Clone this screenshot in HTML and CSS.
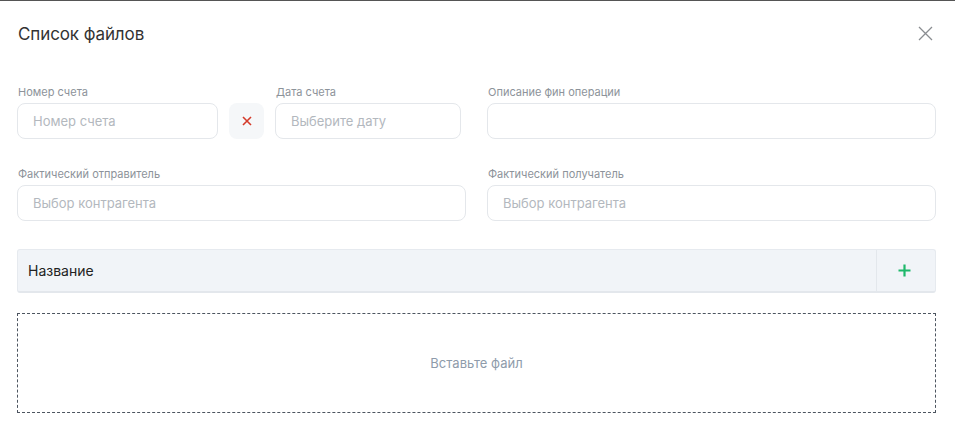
FILE: index.html
```html
<!DOCTYPE html>
<html lang="ru">
<head>
<meta charset="utf-8">
<title>Список файлов</title>
<link rel="stylesheet" href="styles.css">
</head>
<body>
<div class="modal">
  <div class="modal-head">
    <h1 class="title">Список файлов</h1>
    <button class="close" aria-label="Закрыть">
      <svg width="15" height="15" viewBox="0 0 15 15"><path d="M1 1L14 14M14 1L1 14" stroke="#8a8d91" stroke-width="1.3" fill="none"/></svg>
    </button>
  </div>

  <div class="form">
    <div class="row">
      <div class="group-left">
        <div class="field f-num">
          <label class="label">Номер счета</label>
          <input class="input" placeholder="Номер счета">
        </div>
        <button class="clear" aria-label="Очистить">
          <svg width="10" height="10" viewBox="0 0 10 10"><path d="M1 1L9 9M9 1L1 9" stroke="#d43a2a" stroke-width="1.6" fill="none"/></svg>
        </button>
        <div class="field f-date">
          <label class="label">Дата счета</label>
          <input class="input" placeholder="Выберите дату">
        </div>
      </div>
      <div class="field">
        <label class="label">Описание фин операции</label>
        <input class="input">
      </div>
    </div>

    <div class="row">
      <div class="field">
        <label class="label">Фактический отправитель</label>
        <input class="input" placeholder="Выбор контрагента">
      </div>
      <div class="field">
        <label class="label">Фактический получатель</label>
        <input class="input" placeholder="Выбор контрагента">
      </div>
    </div>
  </div>

  <div class="table-head">
    <div class="th-name">Название</div>
    <div class="th-add">
      <svg width="13" height="13" viewBox="0 0 13 13"><path d="M6.5 0.5V12.5M0.5 6.5H12.5" stroke="#1fb86b" stroke-width="2.2" fill="none"/></svg>
    </div>
  </div>

  <div class="dropzone">Вставьте файл</div>
</div>
</body>
</html>
```

FILE: styles.css
```css
* { box-sizing: border-box; }
html, body { margin: 0; padding: 0; background: #fff; }
body {
  font-family: Inter, "Noto Sans", sans-serif;
  color: #222;
}
.modal {
  width: 955px;
  height: 441px;
  border-top: 1px solid #555;
  padding: 0 19px 0 17px;
}
.modal-head {
  display: flex;
  justify-content: space-between;
  align-items: center;
  height: 66px;
  padding-bottom: 1px;
}
.title {
  margin: 0 0 0 1px;
  font-size: 17px;
  font-weight: 400;
  color: #333;
  letter-spacing: -0.1px;
}
.close {
  border: 0;
  background: none;
  padding: 0;
  margin-right: 3px;
  width: 15px;
  height: 15px;
  display: flex;
}
.form {
  display: flex;
  flex-direction: column;
  gap: 28px;
  padding-top: 18px;
}
.row {
  display: grid;
  grid-template-columns: 449px 449px;
  column-gap: 21px;
}
.group-left {
  display: flex;
  align-items: flex-end;
  gap: 11px;
}
.f-num { width: 201px; }
.f-date { width: 186px; }
.field {
  display: flex;
  flex-direction: column;
}
.label {
  font-size: 11px;
  color: #8d939a;
  height: 18px;
  line-height: 14px;
  padding-left: 1px;
}
.input {
  height: 36px;
  border: 1px solid #e4e7eb;
  border-radius: 8px;
  padding: 0 15px;
  font-family: inherit;
  font-size: 13px;
  color: #333;
  background: #fff;
  outline: none;
  width: 100%;
}
.input::placeholder { color: #b3b8be; }
.clear {
  width: 35px;
  height: 36px;
  border: 0;
  border-radius: 8px;
  background: #f5f7f9;
  display: flex;
  align-items: center;
  justify-content: center;
  padding: 0;
}
.table-head {
  margin-top: 28px;
  height: 44px;
  display: flex;
  background: #f1f4f8;
  border: 1px solid #e6eaef;
  border-bottom: 2px solid #e3e7ec;
  border-radius: 3px;
}
.th-name {
  flex: 1;
  display: flex;
  align-items: center;
  padding-left: 10px;
  font-size: 14px;
  color: #222;
}
.th-add {
  width: 59px;
  border-left: 1px solid #e3e7ec;
  display: flex;
  align-items: center;
  justify-content: center;
  padding-right: 3px;
}
.dropzone {
  margin-top: 20px;
  height: 100px;
  border: 1px dashed #4d5560;
  display: flex;
  align-items: center;
  justify-content: center;
  font-size: 13px;
  color: #8e9baa;
}
```
